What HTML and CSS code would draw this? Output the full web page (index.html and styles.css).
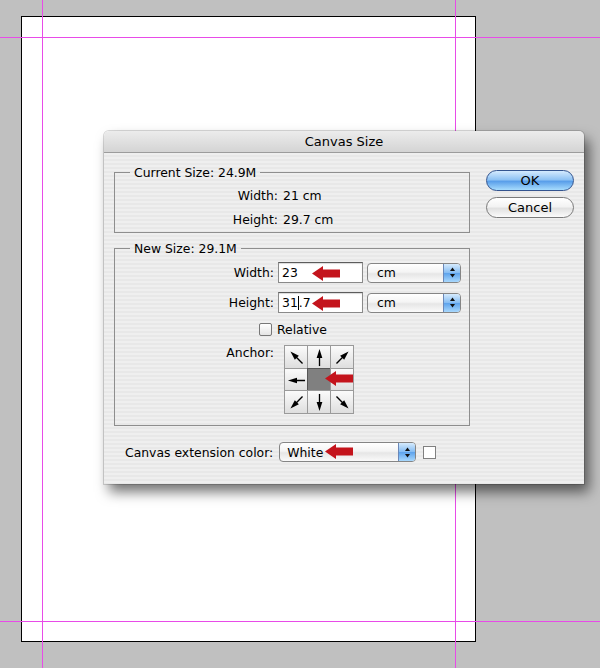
FILE: index.html
```html
<!DOCTYPE html>
<html lang="en">
<head>
    <meta charset="UTF-8">
    <meta name="viewport" content="width=device-width, initial-scale=1.0">
    <title>Canvas Size</title>
    <link rel="stylesheet" href="styles.css">
</head>
<body>
    <div class="workspace">
        <!-- document page and guides -->
        <div class="page"></div>
        <div class="guide guide-v guide-left"></div>
        <div class="guide guide-v guide-right"></div>
        <div class="guide guide-h guide-top"></div>
        <div class="guide guide-h guide-bottom"></div>

        <div class="dialog">
            <div class="titlebar">Canvas Size</div>
            <div class="dialog-body">
                <div class="groups">
                    <fieldset class="group group-current">
                        <legend>Current Size: 24.9M</legend>
                        <div class="info-grid">
                            <span class="label">Width:</span><span>21 cm</span>
                            <span class="label">Height:</span><span>29.7 cm</span>
                        </div>
                    </fieldset>

                    <fieldset class="group group-new">
                        <legend>New Size: 29.1M</legend>
                        <div class="form-grid">
                            <span class="label">Width:</span>
                            <div class="field">23
                                <svg class="callout callout-field" width="28" height="15" viewBox="0 0 28 15"><polygon points="0,7.5 11,0 11,3.5 28,3.5 28,11.5 11,11.5 11,15"/></svg>
                            </div>
                            <div class="popup"><span>cm</span><span class="stepper"><svg width="7" height="11" viewBox="0 0 7 11"><polygon points="3.5,0.5 6,4 1,4"/><polygon points="3.5,10.5 6,7 1,7"/></svg></span></div>

                            <span class="label">Height:</span>
                            <div class="field">31<span class="caret"></span>.7
                                <svg class="callout callout-field" width="28" height="15" viewBox="0 0 28 15"><polygon points="0,7.5 11,0 11,3.5 28,3.5 28,11.5 11,11.5 11,15"/></svg>
                            </div>
                            <div class="popup"><span>cm</span><span class="stepper"><svg width="7" height="11" viewBox="0 0 7 11"><polygon points="3.5,0.5 6,4 1,4"/><polygon points="3.5,10.5 6,7 1,7"/></svg></span></div>

                            <span class="checkbox"></span>
                            <span class="check-label">Relative</span>

                            <span class="label anchor-label">Anchor:</span>
                            <div class="anchor">
                                <div class="cell"><svg class="arrow nw" viewBox="0 0 20 20"><line x1="10" y1="19" x2="10" y2="9"/><polygon points="10,1 7,10.5 13,10.5"/></svg></div>
                                <div class="cell"><svg class="arrow n" viewBox="0 0 20 20"><line x1="10" y1="19" x2="10" y2="9"/><polygon points="10,1 7,10.5 13,10.5"/></svg></div>
                                <div class="cell"><svg class="arrow ne" viewBox="0 0 20 20"><line x1="10" y1="19" x2="10" y2="9"/><polygon points="10,1 7,10.5 13,10.5"/></svg></div>
                                <div class="cell"><svg class="arrow w" viewBox="0 0 20 20"><line x1="10" y1="19" x2="10" y2="9"/><polygon points="10,1 7,10.5 13,10.5"/></svg></div>
                                <div class="cell center"></div>
                                <div class="cell"></div>
                                <div class="cell"><svg class="arrow sw" viewBox="0 0 20 20"><line x1="10" y1="19" x2="10" y2="9"/><polygon points="10,1 7,10.5 13,10.5"/></svg></div>
                                <div class="cell"><svg class="arrow s" viewBox="0 0 20 20"><line x1="10" y1="19" x2="10" y2="9"/><polygon points="10,1 7,10.5 13,10.5"/></svg></div>
                                <div class="cell"><svg class="arrow se" viewBox="0 0 20 20"><line x1="10" y1="19" x2="10" y2="9"/><polygon points="10,1 7,10.5 13,10.5"/></svg></div>
                                <svg class="callout callout-anchor" width="28" height="15" viewBox="0 0 28 15"><polygon points="0,7.5 11,0 11,3.5 28,3.5 28,11.5 11,11.5 11,15"/></svg>
                            </div>
                        </div>
                    </fieldset>

                    <div class="ext-row">
                        <span>Canvas extension color:</span>
                        <div class="popup popup-wide"><span>White</span><span class="stepper"><svg width="7" height="11" viewBox="0 0 7 11"><polygon points="3.5,0.5 6,4 1,4"/><polygon points="3.5,10.5 6,7 1,7"/></svg></span>
                            <svg class="callout callout-popup" width="28" height="15" viewBox="0 0 28 15"><polygon points="0,7.5 11,0 11,3.5 28,3.5 28,11.5 11,11.5 11,15"/></svg>
                        </div>
                        <span class="swatch"></span>
                    </div>
                </div>

                <div class="buttons">
                    <button class="button default">OK</button>
                    <button class="button">Cancel</button>
                </div>
            </div>
        </div>
    </div>
</body>
</html>
```

FILE: styles.css
```css
/* Reset and base styles */
* {
    margin: 0;
    padding: 0;
    box-sizing: border-box;
}

body {
    font-family: "DejaVu Sans", "Liberation Sans", sans-serif;
    font-size: 12.4px;
    color: #000;
    background: #c0c0c0;
    overflow: hidden;
}

/* Document canvas */
.workspace {
    position: relative;
    width: 600px;
    height: 668px;
    overflow: hidden;
}

.page {
    position: absolute;
    left: 21px;
    top: 16px;
    width: 455px;
    height: 626px;
    background: #fff;
    border: 1px solid #000;
}

.guide {
    position: absolute;
    background: #e84be8;
}

.guide-v {
    top: 0;
    width: 1px;
    height: 668px;
}

.guide-h {
    left: 0;
    height: 1px;
    width: 600px;
}

.guide-left { left: 42px; }
.guide-right { left: 455px; }
.guide-top { top: 37px; }
.guide-bottom { top: 621px; }

/* Dialog window */
.dialog {
    position: absolute;
    left: 104px;
    top: 131px;
    width: 480px;
    height: 353px;
    border-radius: 5px 5px 0 0;
    box-shadow: 0 0 0 1px rgba(0, 0, 0, 0.15), 5px 8px 13px rgba(0, 0, 0, 0.55);
    display: flex;
    flex-direction: column;
}

.titlebar {
    height: 22px;
    line-height: 22px;
    text-align: center;
    font-size: 13px;
    background: linear-gradient(#ececec, #d4d4d4);
    border-bottom: 1px solid #9c9c9c;
    border-radius: 5px 5px 0 0;
}

.dialog-body {
    flex: 1;
    display: flex;
    gap: 16px;
    padding: 12px 10px 0 10px;
    background: repeating-linear-gradient(to bottom, #efefef 0, #efefef 2px, #e8e8e8 2px, #e8e8e8 4px);
}

.groups {
    width: 356px;
}

/* Group boxes */
.group {
    border: 1px solid #8e8e8e;
    padding: 0;
    margin: 0;
}

.group legend {
    margin-left: 15px;
    padding: 0 4px;
    line-height: 15px;
}

.group-current {
    padding: 3px 0 1px 0;
}

.group-new {
    margin-top: 8px;
    padding: 6px 0 12px 0;
}

.info-grid {
    display: grid;
    grid-template-columns: 163px auto;
    column-gap: 5px;
    grid-auto-rows: 24px;
    align-items: center;
}

.label {
    text-align: right;
}

.form-grid {
    display: grid;
    grid-template-columns: 159px 85px 94px;
    grid-template-rows: 21px 21px 14px 68px;
    column-gap: 4px;
    row-gap: 9px;
    align-items: center;
}

.form-grid .anchor-label {
    align-self: start;
}

/* Controls */
.field {
    position: relative;
    height: 21px;
    line-height: 19px;
    padding-left: 3px;
    background: #fff;
    border: 1px solid #8a8a8a;
    border-top-color: #5c5c5c;
    box-shadow: inset 0 1px 1px rgba(0, 0, 0, 0.15);
}

.caret {
    display: inline-block;
    width: 1px;
    height: 14px;
    background: #000;
    vertical-align: -3px;
}

.popup {
    position: relative;
    display: flex;
    align-items: center;
    justify-content: space-between;
    height: 20px;
    padding-left: 9px;
    border: 1px solid #858585;
    border-radius: 4px;
    background: linear-gradient(#ffffff, #f4f4f4 45%, #e6e6e6 55%, #fafafa);
}

.popup-wide {
    width: 137px;
    padding-left: 7px;
}

.stepper {
    align-self: stretch;
    width: 17px;
    display: flex;
    align-items: center;
    justify-content: center;
    border-left: 1px solid #6b88b8;
    border-radius: 0 3px 3px 0;
    background: linear-gradient(#d6ebfd, #86bdf3 48%, #5ea3ec 52%, #a8d8fd);
}

.stepper polygon {
    fill: #111;
}

.checkbox {
    justify-self: end;
    margin-right: 2px;
    width: 13px;
    height: 13px;
    border: 1px solid #777;
    border-radius: 2px;
    background: linear-gradient(#ffffff, #e4e4e4);
}

.check-label {
    grid-column: 2 / 4;
    margin-left: -1px;
}

/* Anchor grid */
.anchor {
    position: relative;
    grid-column: 2 / 4;
    margin-left: 6px;
    width: 69px;
    height: 68px;
    display: grid;
    grid-template-columns: 23px 23px 23px;
    grid-template-rows: 23px 22px 23px;
    border: 1px solid #8a8a8a;
}

.cell {
    display: flex;
    align-items: center;
    justify-content: center;
    border: 1px solid #9a9a9a;
    margin: -1px 0 0 -1px;
    width: 24px;
    height: 24px;
    background: linear-gradient(#fbfbfb, #dedede);
}

.cell.center {
    background: #808080;
    border-color: #555;
}

.arrow {
    width: 19px;
    height: 19px;
}

.arrow line {
    stroke: #000;
    stroke-width: 1.4;
}

.arrow polygon {
    fill: #000;
}

.arrow.nw { transform: rotate(-45deg); }
.arrow.ne { transform: rotate(45deg); }
.arrow.w { transform: rotate(-90deg); }
.arrow.sw { transform: rotate(-135deg); }
.arrow.s { transform: rotate(180deg); }
.arrow.se { transform: rotate(135deg); }

/* Red callout arrows over the controls */
.callout {
    position: absolute;
}

.callout polygon {
    fill: #c4141c;
}

.callout-field {
    left: 33px;
    top: 3px;
}

.callout-anchor {
    left: 40px;
    top: 25px;
}

.callout-popup {
    left: 45px;
    top: 1px;
}

/* Extension colour row */
.ext-row {
    display: flex;
    align-items: center;
    gap: 6px;
    margin-top: 16px;
    padding-left: 11px;
}

.swatch {
    width: 13px;
    height: 13px;
    margin-left: 1px;
    background: #fff;
    border: 1px solid #808080;
}

/* Buttons */
.buttons {
    display: flex;
    flex-direction: column;
    gap: 6px;
    padding-top: 5px;
}

.button {
    width: 88px;
    height: 21px;
    font-family: "DejaVu Sans", "Liberation Sans", sans-serif;
    font-size: 13px;
    color: #000;
    border: 1px solid #7a7a7a;
    border-radius: 11px;
    background: linear-gradient(#ffffff, #f3f3f3 45%, #e1e1e1 55%, #fbfbfb);
}

.button.default {
    border-color: #33548f;
    background: linear-gradient(#d4eafe, #8fc3f4 45%, #5a9fea 55%, #a7dcfd);
}
```
